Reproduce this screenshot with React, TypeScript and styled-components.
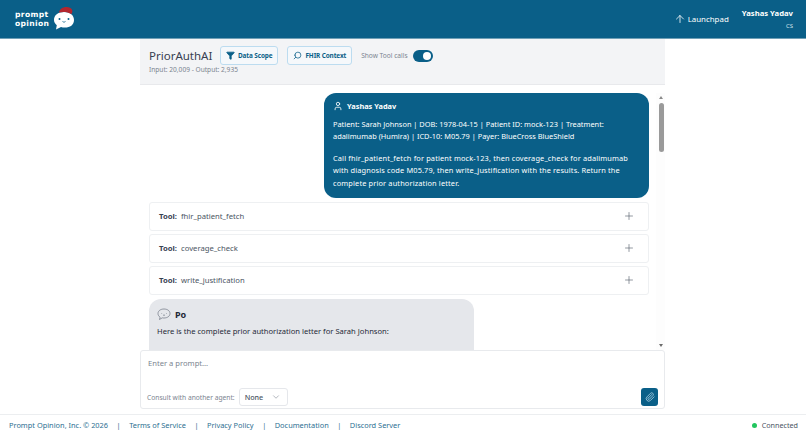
import { Filter, Plus, Search, ArrowUp, User, ChevronDown, Paperclip } from "lucide-react";
import styled, { createGlobalStyle } from "styled-components";

const GlobalStyle = createGlobalStyle`
  html, body {
    margin: 0;
    padding: 0;
    height: 100%;
    background: #fff;
    font-family: "Noto Sans", "Lato", sans-serif;
    color: #1f2937;
  }
  * { box-sizing: border-box; }
`;

const Page = styled.div`
  width: 806px;
  height: 440px;
  display: flex;
  flex-direction: column;
  overflow: hidden;
`;

const Header = styled.header`
  height: 39px;
  flex: none;
  background: #0a5f88;
  border-bottom: 1px solid #6f9fb6;
  display: flex;
  align-items: center;
  justify-content: space-between;
  padding: 0 13px 0 15px;
`;

const Brand = styled.div`
  display: flex;
  align-items: center;
  gap: 3px;
`;

const BrandText = styled.div`
  color: #fff;
  font-family: "DejaVu Sans", sans-serif;
  font-size: 7.6px;
  font-weight: 700;
  line-height: 9px;
  letter-spacing: 0.35px;
`;

const LogoMark = styled.svg`
  margin-top: -3px;
`;

const HeaderRight = styled.div`
  display: flex;
  align-items: center;
  gap: 13px;
`;

const Launchpad = styled.div`
  display: flex;
  align-items: center;
  gap: 2px;
  color: #fff;
  font-size: 7.9px;
`;

const UserBlock = styled.div`
  display: flex;
  flex-direction: column;
  align-items: flex-end;
  color: #fff;
  margin-top: -1px;
`;

const UserName = styled.div`
  font-size: 7.7px;
  font-weight: 700;
  line-height: 14px;
`;

const UserOrg = styled.div`
  font-size: 6px;
  line-height: 12px;
  color: #d3e3ea;
`;

const Column = styled.main`
  width: 525px;
  margin-left: 140px;
  height: 372px;
  flex: none;
  display: flex;
  flex-direction: column;
`;

const PanelHead = styled.div`
  height: 46px;
  flex: none;
  background: #f3f4f6;
  border-bottom: 1px solid #e8e9ec;
  padding: 7px 9px 0;
`;

const TitleRow = styled.div`
  display: flex;
  align-items: center;
  height: 19px;
`;

const Title = styled.h1`
  margin: 0 8px 0 0;
  width: 63px;
  white-space: nowrap;
  font-size: 11.5px;
  font-weight: 400;
  color: #374151;
`;

const ScopeButton = styled.button`
  height: 19px;
  display: flex;
  align-items: center;
  gap: 3px;
  padding: 0 5px;
  margin-right: 9px;
  background: #f5f8fb;
  border: 1px solid #bcdcf0;
  border-radius: 3px;
  color: #0a5f88;
  font-family: inherit;
  font-size: 6.4px;
  font-weight: 700;
  letter-spacing: -0.1px;
`;

const ToggleLabel = styled.span`
  font-size: 6.6px;
  color: #7b8490;
  margin-right: 5px;
`;

const Toggle = styled.span`
  width: 20px;
  height: 12px;
  border-radius: 6px;
  background: #0a5f88;
  display: flex;
  align-items: center;
  justify-content: flex-end;
  padding-right: 2px;
  &::after {
    content: "";
    width: 8px;
    height: 8px;
    border-radius: 50%;
    background: #fff;
  }
`;

const Usage = styled.div`
  font-size: 6.6px;
  line-height: 9px;
  color: #7b8490;
`;

const ThreadWrap = styled.div`
  position: relative;
  height: 257px;
  flex: none;
  margin-top: 8px;
`;

const Thread = styled.div`
  height: 100%;
  overflow: hidden;
  display: flex;
  flex-direction: column;
  padding: 0 16px 0 9px;
`;

/* scrollbar sits over the right edge of the thread */
const ScrollTrack = styled.div`
  position: absolute;
  top: 0;
  right: 0;
  bottom: 0;
  width: 9px;
  background: #fdfdfd;
`;

const ScrollThumb = styled.div`
  position: absolute;
  top: 10px;
  left: 3px;
  width: 5px;
  height: 49px;
  border-radius: 3px;
  background: #9a9a9a;
`;

const ScrollArrow = styled.div<{ $down?: boolean }>`
  position: absolute;
  left: 3px;
  width: 0;
  height: 0;
  border-left: 2.5px solid transparent;
  border-right: 2.5px solid transparent;
  ${(p) =>
    p.$down
      ? "bottom: 3px; border-top: 3px solid #6b6b6b;"
      : "top: 3px; border-bottom: 3px solid #8a8a8a;"}
`;

const UserBubble = styled.div`
  flex: none;
  align-self: flex-end;
  width: 325px;
  height: 105px;
  background: #0a5f88;
  color: #fff;
  border-radius: 12px;
  padding: 7px 9px;
  font-size: 7.4px;
  line-height: 12.4px;
  white-space: nowrap;
`;

const BubbleAuthor = styled.div`
  display: flex;
  align-items: center;
  gap: 4px;
  font-weight: 700;
  color: #fff;
  line-height: 12px;
  margin-bottom: 6px;
`;

const Para = styled.p<{ $spread?: number }>`
  margin: 0 0 9px;
  letter-spacing: ${(p) => p.$spread ?? 0}px;
`;

const ToolList = styled.div`
  flex: none;
  margin-top: 4px;
  margin-bottom: 1px;
  display: flex;
  flex-direction: column;
`;

const ToolRow = styled.div`
  flex: none;
  height: 28.5px;
  margin-bottom: 3.5px;
  padding: 0 13px 1px 9px;
  background: #fff;
  border: 1px solid #eef0f2;
  border-radius: 3px;
  display: flex;
  align-items: center;
  justify-content: space-between;
  font-size: 7.7px;
  color: #4b5563;
`;

const ToolName = styled.b`
  color: #374151;
  margin-right: 4px;
`;

const AgentBubble = styled.div`
  flex: none;
  width: 325px;
  min-height: 120px;
  background: #e5e7eb;
  border-radius: 12px 12px 0 0;
  padding: 7px 8px;
  font-size: 7.6px;
  color: #1f2937;
`;

const AgentAuthor = styled.div`
  display: flex;
  align-items: center;
  gap: 4px;
  font-size: 9px;
  font-weight: 700;
  margin-bottom: 4px;
  height: 16px;
`;

const Composer = styled.div`
  height: 59px;
  flex: none;
  border: 1px solid #e8eaed;
  border-radius: 3px;
  padding: 7px 6px 2px 6px;
  display: flex;
  flex-direction: column;
  justify-content: space-between;
`;

const Prompt = styled.div`
  font-size: 7.6px;
  color: #7b8490;
  padding-left: 1px;
`;

const ComposerRow = styled.div`
  display: flex;
  align-items: center;
  justify-content: space-between;
`;

const Consult = styled.div`
  display: flex;
  align-items: center;
  gap: 4px;
  font-size: 6.7px;
  color: #7b8490;
`;

const AgentSelect = styled.div`
  width: 49px;
  height: 18px;
  border: 1px solid #e5e7eb;
  border-radius: 3px;
  display: flex;
  align-items: center;
  justify-content: space-between;
  padding: 0 6px 0 5px;
  font-size: 7.2px;
  font-weight: 500;
  color: #4b5563;
`;

const AttachButton = styled.button`
  width: 17px;
  height: 18px;
  padding: 0;
  border: none;
  border-radius: 3px;
  background: #0a5f88;
  color: #a9cfe2;
  display: flex;
  align-items: center;
  justify-content: center;
`;

const Footer = styled.footer`
  margin-top: 3px;
  flex: 1;
  border-top: 1px solid #eceef0;
  display: flex;
  align-items: center;
  justify-content: space-between;
  padding: 0 8px 5px 9px;
`;

const FooterLinks = styled.nav`
  display: flex;
  gap: 8.5px;
  font-size: 7.4px;
  color: #2d6f92;
`;

const Status = styled.div`
  display: flex;
  align-items: center;
  gap: 5px;
  font-size: 7.2px;
  color: #4b5563;
`;

const Dot = styled.span`
  width: 5px;
  height: 5px;
  border-radius: 50%;
  background: #22c55e;
`;

function Logo() {
  return (
    <LogoMark width="24" height="24" viewBox="0 0 24 24">
      <path d="M12 6c6 0 10 3 10 8s-4 7.500-9 7.500c-1.500 0-3-.2-4-.6L4 23.500l.8-4.300C3 17.800 2 16 2 14c0-5 4-8 10-8z" fill="#fff" />
      <path d="M7 6.500C7.500 3 11 .8 15 1c3.500.2 5.800 2.200 5.300 5-.1.800-.5 1.500-1 2C16 5.800 11 5.500 7 6.500z" fill="#b3262e" />
      <circle cx="7.500" cy="13" r="1" fill="#0a5f88" />
      <circle cx="16.500" cy="13" r="1" fill="#0a5f88" />
      <path d="M10.500 15.500c.8.800 2.200.800 3 0" stroke="#0a5f88" strokeWidth="0.8" fill="none" />
    </LogoMark>
  );
}

function PoIcon() {
  return (
    <svg width="14" height="14" viewBox="0 0 14 14" fill="none" stroke="#6b7280" strokeWidth="0.7">
      <path d="M7 2c3.300 0 6 1.800 6 4.500S10.300 11 7 11c-.6 0-1.200 0-1.700-.2L2.500 12.500l.6-2.300C1.800 9.400 1 8.100 1 6.500 1 3.800 3.700 2 7 2z" />
      <path d="M4.500 6.500h.6M9 6.500h.6M6 8c.6.400 1.400.400 2 0" />
    </svg>
  );
}

const tools = ["fhir_patient_fetch", "coverage_check", "write_justification"];
const links = ["Prompt Opinion, Inc. © 2026", "|", "Terms of Service", "|", "Privacy Policy", "|", "Documentation", "|", "Discord Server"];

export default function App() {
  return (
    <>
      <GlobalStyle />
      <Page>
        <Header>
          <Brand>
            <BrandText>
              prompt
              <br />
              opinion
            </BrandText>
            <Logo />
          </Brand>
          <HeaderRight>
            <Launchpad>
              <ArrowUp size={12} strokeWidth={1.6} />
              Launchpad
            </Launchpad>
            <UserBlock>
              <UserName>Yashas Yadav</UserName>
              <UserOrg>CS</UserOrg>
            </UserBlock>
          </HeaderRight>
        </Header>
        <Column>
          <PanelHead>
            <TitleRow>
              <Title>PriorAuthAI</Title>
              <ScopeButton>
                <Filter size={9} fill="#0a5f88" />
                Data Scope
              </ScopeButton>
              <ScopeButton>
                <Search size={9} style={{ transform: "scaleX(-1)" }} />
                FHIR Context
              </ScopeButton>
              <ToggleLabel>Show Tool calls</ToggleLabel>
              <Toggle />
            </TitleRow>
            <Usage>Input: 20,009 - Output: 2,935</Usage>
          </PanelHead>
          <ThreadWrap>
            <Thread>
              <UserBubble>
                <BubbleAuthor>
                  <User size={10} />
                  Yashas Yadav
                </BubbleAuthor>
                <Para>
                  Patient: Sarah Johnson | DOB: 1978-04-15 | Patient ID: mock-123 | Treatment:
                  <br />
                  adalimumab (Humira) | ICD-10: M05.79 | Payer: BlueCross BlueShield
                </Para>
                <Para $spread={0.14}>
                  Call fhir_patient_fetch for patient mock-123, then coverage_check for adalimumab
                  <br />
                  with diagnosis code M05.79, then write_justification with the results. Return the
                  <br />
                  complete prior authorization letter.
                </Para>
              </UserBubble>
              <ToolList>
                {tools.map((tool) => (
                  <ToolRow key={tool}>
                    <span>
                      <ToolName>Tool:</ToolName>
                      {tool}
                    </span>
                    <Plus size={12} strokeWidth={1.2} color="#4b5563" />
                  </ToolRow>
                ))}
              </ToolList>
              <AgentBubble>
                <AgentAuthor>
                  <PoIcon />
                  Po
                </AgentAuthor>
                Here is the complete prior authorization letter for Sarah Johnson:
              </AgentBubble>
            </Thread>
            <ScrollTrack>
              <ScrollArrow />
              <ScrollThumb />
              <ScrollArrow $down />
            </ScrollTrack>
          </ThreadWrap>
          <Composer>
            <Prompt>Enter a prompt...</Prompt>
            <ComposerRow>
              <Consult>
                Consult with another agent:
                <AgentSelect>
                  None
                  <ChevronDown size={10} strokeWidth={1.2} color="#6b7280" />
                </AgentSelect>
              </Consult>
              <AttachButton>
                <Paperclip size={10} />
              </AttachButton>
            </ComposerRow>
          </Composer>
        </Column>
        <Footer>
          <FooterLinks>
            {links.map((link, i) => (
              <span key={i}>{link}</span>
            ))}
          </FooterLinks>
          <Status>
            <Dot />
            Connected
          </Status>
        </Footer>
      </Page>
    </>
  );
}
